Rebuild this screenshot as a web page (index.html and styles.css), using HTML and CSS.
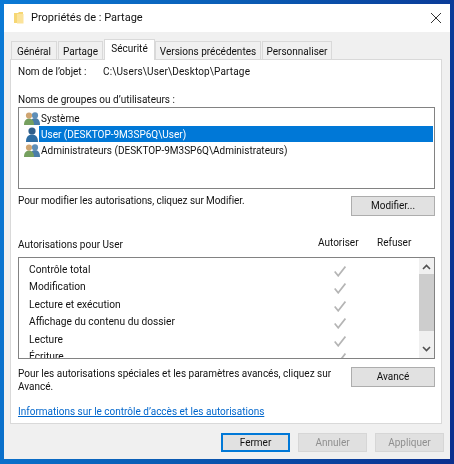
FILE: index.html
```html
<!DOCTYPE html>
<html lang="fr">
<head>
<meta charset="utf-8">
<title>Propriétés de : Partage</title>
<link rel="stylesheet" href="styles.css">
</head>
<body>
<svg width="0" height="0" class="defs">
  <defs>
    <symbol id="check" viewBox="0 0 12 11"><path d="M0.7 5.5 L4.2 9.8 L11.4 0.6" fill="none" stroke="#b5b5b5" stroke-width="1.7"/></symbol>
    <symbol id="group" viewBox="0 0 16 13">
      <circle cx="11" cy="3.4" r="3.1" fill="#5f8fb8"/>
      <path d="M6 13 C6 8 8 6.3 11 6.3 C14 6.3 16 8 16 13Z" fill="#4a7da8"/>
      <circle cx="5" cy="3.6" r="3.1" fill="#cfa572"/>
      <path d="M0 13 C0 8.5 2 6.8 5 6.8 C8 6.8 10 8.5 10 13Z" fill="#76a05f"/>
    </symbol>
    <symbol id="user" viewBox="0 0 13 15">
      <circle cx="6.5" cy="4" r="3.6" fill="#2f5f8c"/>
      <path d="M0.5 15 C0.5 9.5 3 7.5 6.5 7.5 C10 7.5 12.5 9.5 12.5 15Z" fill="#2d6da3"/>
    </symbol>
  </defs>
</svg>
<div class="win">
  <header class="title">
    <svg class="folder" viewBox="0 0 10 12" width="10" height="12"><path d="M0 1 H4 L5 0 H9 V11 H0Z" fill="#f6d774"/><path d="M3 2 H9.5 V11.5 H3Z" fill="#fbe39a"/></svg>
    <span class="title-text">Propriétés de : Partage</span>
    <svg class="close" viewBox="0 0 10 10" width="10" height="10"><path d="M0 0 L10 10 M10 0 L0 10" stroke="#333" stroke-width="1" fill="none"/></svg>
  </header>
  <nav class="tabs">
    <span class="tab t1">Général</span>
    <span class="tab t2">Partage</span>
    <span class="tab active">Sécurité</span>
    <span class="tab t4">Versions précédentes</span>
    <span class="tab t5">Personnaliser</span>
  </nav>
  <main class="panel">
    <div class="object"><span class="obj-label">Nom de l’objet :</span><span class="obj-path">C:\Users\User\Desktop\Partage</span></div>
    <div class="names-label">Noms de groupes ou d’utilisateurs :</div>
    <ul class="users">
      <li class="user-row"><svg class="uicon" width="16" height="13"><use href="#group"/></svg><span class="uname">Système</span></li>
      <li class="user-row selected"><svg class="uicon" width="16" height="15"><use href="#user"/></svg><span class="uname">User (DESKTOP-9M3SP6Q\User)</span></li>
      <li class="user-row"><svg class="uicon" width="16" height="13"><use href="#group"/></svg><span class="uname">Administrateurs (DESKTOP-9M3SP6Q\Administrateurs)</span></li>
    </ul>
    <div class="action action-mod">
      <span class="hint">Pour modifier les autorisations, cliquez sur Modifier.</span>
      <button class="btn side">Modifier...</button>
    </div>
    <div class="perm-head">
      <span class="perm-title">Autorisations pour User</span>
      <span class="col-a">Autoriser</span>
      <span class="col-r">Refuser</span>
    </div>
    <div class="perms">
      <ul class="perm-list">
        <li class="perm">Contrôle total<svg class="chk" width="12" height="11"><use href="#check"/></svg></li>
        <li class="perm">Modification<svg class="chk" width="12" height="11"><use href="#check"/></svg></li>
        <li class="perm">Lecture et exécution<svg class="chk" width="12" height="11"><use href="#check"/></svg></li>
        <li class="perm">Affichage du contenu du dossier<svg class="chk" width="12" height="11"><use href="#check"/></svg></li>
        <li class="perm">Lecture<svg class="chk" width="12" height="11"><use href="#check"/></svg></li>
        <li class="perm">Écriture<svg class="chk" width="12" height="11"><use href="#check"/></svg></li>
      </ul>
      <div class="scroll">
        <svg class="arrow" viewBox="0 0 9 6" width="9" height="6"><path d="M1 5 L4.5 1.5 L8 5" fill="none" stroke="#505050" stroke-width="1.6"/></svg>
        <div class="thumb"></div>
        <svg class="arrow" viewBox="0 0 9 6" width="9" height="6"><path d="M1 1 L4.5 4.5 L8 1" fill="none" stroke="#505050" stroke-width="1.6"/></svg>
      </div>
    </div>
    <div class="action action-adv">
      <span class="hint wrap">Pour les autorisations spéciales et les paramètres avancés, cliquez sur Avancé.</span>
      <button class="btn side">Avancé</button>
    </div>
    <a class="link" href="#">Informations sur le contrôle d’accès et les autorisations</a>
  </main>
  <footer class="foot">
    <button class="btn fbtn default">Fermer</button>
    <button class="btn fbtn off">Annuler</button>
    <button class="btn fbtn off">Appliquer</button>
  </footer>
</div>
</body>
</html>
```
FILE: styles.css
```css
* { box-sizing: border-box; }
html, body { margin: 0; height: 100%; }
body {
  width: 454px; height: 464px; overflow: hidden;
  padding: 4px 4px 5px 4px;
  background: linear-gradient(100deg, #0a7ad6 0%, #0a5cb4 45%, #0b2f8e 100%);
  font-family: Roboto, "Liberation Sans", sans-serif;
  font-size: 10px; line-height: 14px; color: #111;
}
.defs { position: absolute; }
ul { list-style: none; margin: 0; padding: 0; }
.win { width: 446px; height: 455px; background: #f0f0f0; display: flex; flex-direction: column; filter: blur(0.35px); }
.title { height: 28px; background: #fff; display: flex; align-items: center; padding: 0 9px 0 10px; flex: none; }
.folder { margin-right: 7px; }
.title-text { font-size: 11px; flex: 1; }
.tabs { display: flex; height: 27px; padding: 7px 0 0 7px; flex: none; align-items: flex-end; position: relative; z-index: 1; }
.tab { height: 18px; border: 1px solid #d9d9d9; border-bottom: 0; background: #f0f0f0; margin-right: 1px; text-align: center; line-height: 19px; white-space: nowrap; }
.t1 { width: 46px; }
.t2 { width: 45px; }
.active { width: 51px; height: 21px; background: #fff; margin: 0 0 -1px 0; line-height: 18px; }
.t4 { width: 106px; }
.t5 { width: 70px; margin-right: 0; }
.panel { width: 432px; height: 365px; margin-left: 6px; background: #fff; border: 1px solid #d9d9d9; padding: 0 6px 0 7px; flex: none; }
.object { display: flex; height: 14px; margin-top: 5px; }
.obj-label { width: 85px; flex: none; }
.obj-path { letter-spacing: 0.15px; }
.names-label { margin-top: 14px; }
.users { height: 82px; border: 1px solid #828282; padding-top: 2px; }
.user-row { display: flex; height: 16px; align-items: center; padding-left: 5px; }
.uicon { flex: none; margin-right: -1px; }
.uname { flex: 1; height: 16px; line-height: 17px; padding-left: 2px; }
.selected .uname { background: #0078d7; color: #fff; margin-right: 1px; }
.action { display: flex; justify-content: space-between; align-items: flex-start; }
.action-mod { margin-top: 4px; height: 23px; }
.action-mod .hint { padding-top: 1px; letter-spacing: -0.08px; }
.btn { font: inherit; color: #111; background: #e1e1e1; border: 1px solid #adadad; padding: 0; }
.side { width: 84px; height: 20px; flex: none; }
.action-mod .side { margin-top: 3px; }
.perm-head { display: flex; height: 14px; margin-top: 19px; padding-top: 1px; }
.perm-title { width: 300px; padding-top: 2px; flex: none; }
.col-a { width: 59px; }
.col-r { width: 50px; }
.perms { height: 102px; margin-top: 8px; border: 1px solid #828282; display: flex; overflow: hidden; }
.perm-list { flex: 1; padding: 3px 0 0 10px; font-size: 10.2px; }
.perm { height: 17.4px; position: relative; line-height: 17px; }
.chk { position: absolute; left: 305px; top: 5px; }
.scroll { width: 15px; background: #f0f0f0; display: flex; flex-direction: column; align-items: center; justify-content: space-between; padding: 6px 0; position: relative; }
.thumb { position: absolute; left: 0; top: 16px; width: 15px; height: 57px; background: #cdcdcd; }
.action-adv { margin-top: 7px; height: 26px; }
.action-adv .side { margin-top: 1px; }
.hint.wrap { width: 334px; line-height: 13px; padding-top: 1px; }
.link { display: block; margin-top: 13px; color: #0066cc; }
.foot { display: flex; justify-content: flex-end; gap: 8px; padding: 9px 6px 0 0; }
.fbtn { width: 69px; height: 19px; }
.default { border: 2px solid #0078d7; }
.off { color: #8f8f8f; background: #e0e0e0; border-color: #d6d6d6; }
```
